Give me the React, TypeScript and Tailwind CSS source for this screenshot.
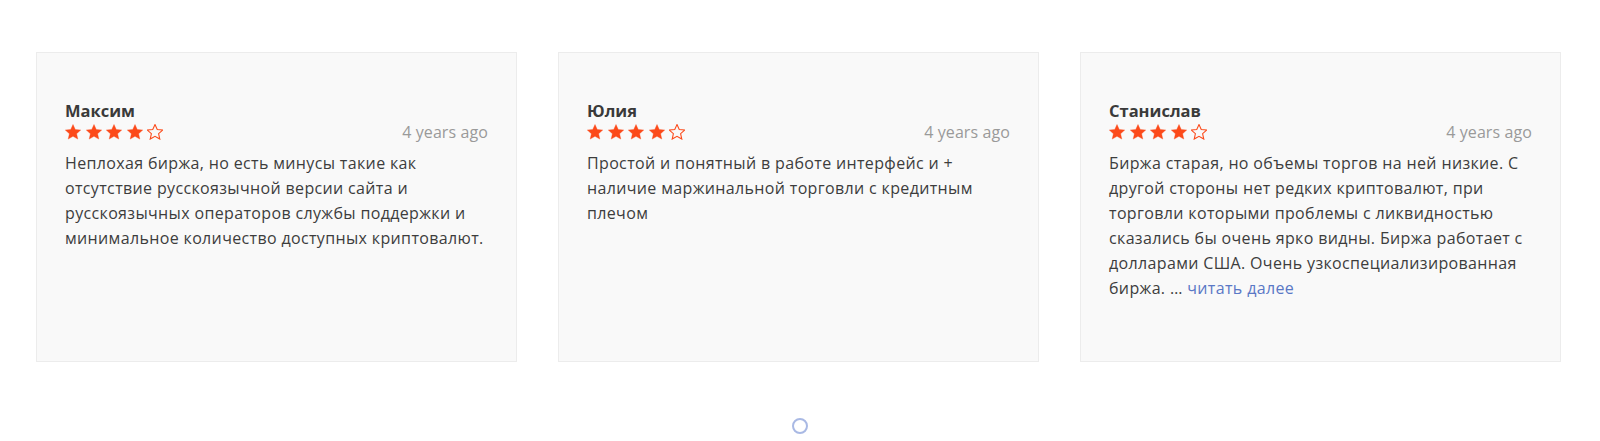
import React from "react";

function Star({ filled }: { filled: boolean }) {
  return (
    <svg width="16" height="16" viewBox="1.5 1.5 21 21" className="block">
      <path
        d="M12 2.2l2.95 6.55 7.15.72-5.37 4.78 1.55 7.03L12 17.6l-6.28 3.68 1.55-7.03L1.9 9.47l7.15-.72z"
        fill={filled ? "#fc4a1a" : "none"}
        stroke="#fc4a1a"
        strokeWidth={filled ? 0.5 : 1.4}
        strokeLinejoin="miter"
      />
    </svg>
  );
}

type Review = { name: string; text: React.ReactNode };

const reviews: Review[] = [
  {
    name: "Максим",
    text: "Неплохая биржа, но есть минусы такие как отсутствие русскоязычной версии сайта и русскоязычных операторов службы поддержки и минимальное количество доступных криптовалют.",
  },
  {
    name: "Юлия",
    text: "Простой и понятный в работе интерфейс и + наличие маржинальной торговли с кредитным плечом",
  },
  {
    name: "Станислав",
    text: (
      <>
        Биржа старая, но объемы торгов на ней низкие. С другой стороны нет редких криптовалют, при торговли которыми проблемы с ликвидностью сказались бы очень ярко видны. Биржа работает с долларами США. Очень узкоспециализированная биржа. …{" "}
        <a className="text-[#5a78c6]">читать далее</a>
      </>
    ),
  },
];

function Card({ r }: { r: Review }) {
  return (
    <div className="w-[481px] h-[310px] shrink-0 bg-[#f9f9f9] border border-[#ececec] pt-[47px] pl-[28px] pr-[28px]">
      <div className="text-[16.5px] leading-[22px] font-bold text-[#3a3a3a]">{r.name}</div>
      <div className="flex items-center justify-between h-[20px]">
        <div className="flex gap-[4.5px]">
          <Star filled />
          <Star filled />
          <Star filled />
          <Star filled />
          <Star filled={false} />
        </div>
        <div className="text-[16px] tracking-[0.1px] text-[#9a9a9a]">4 years ago</div>
      </div>
      <p className="mt-[9px] text-[16px] leading-[25px] tracking-[0.35px] text-[#3d3d3d]">{r.text}</p>
    </div>
  );
}

export default function App() {
  return (
    <div className="w-[1600px] h-[441px] bg-white font-['Open_Sans',sans-serif] overflow-hidden">
      <div className="flex gap-[41px] pl-[36px] pt-[52px]">
        {reviews.map((r) => (
          <Card key={r.name} r={r} />
        ))}
      </div>
      <div className="flex justify-center mt-[56px]">
        <div className="w-[16px] h-[16px] rounded-full border-2 border-[#a9b9e4] ml-[-1px]" />
      </div>
    </div>
  );
}
